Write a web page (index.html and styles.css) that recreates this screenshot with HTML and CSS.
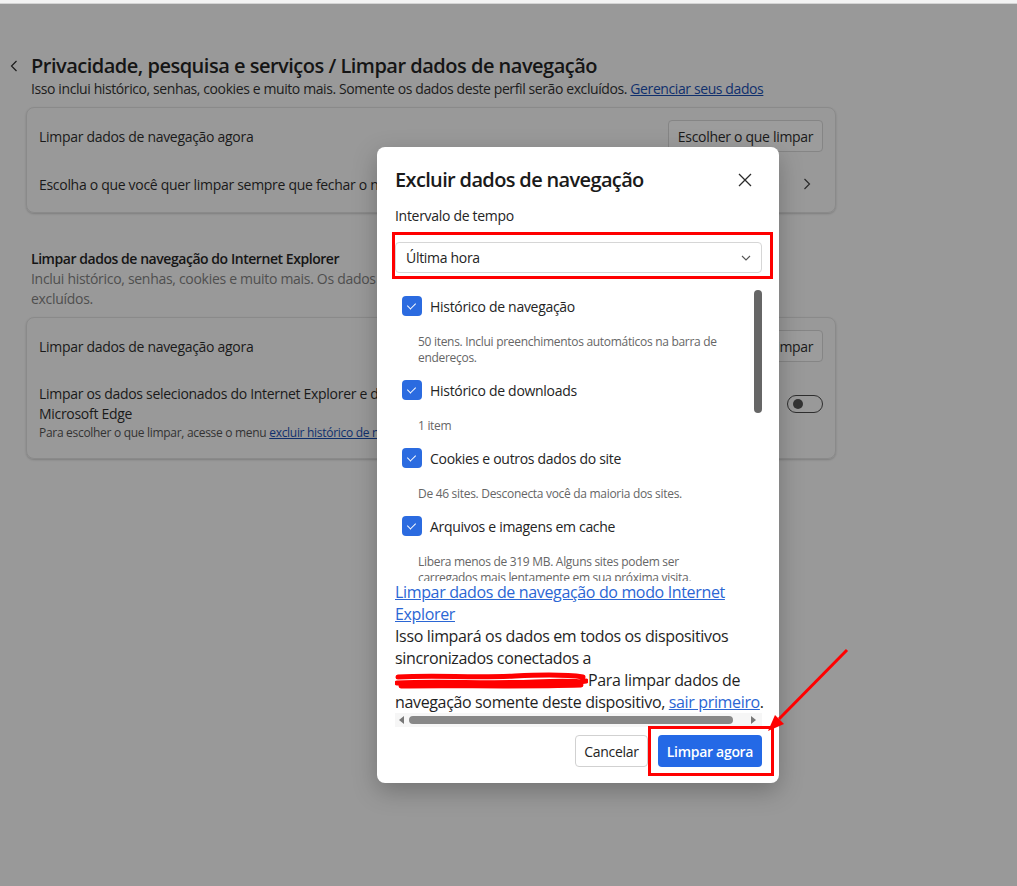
FILE: index.html
```html
<!DOCTYPE html>
<html lang="pt-BR">
<head>
    <meta charset="UTF-8">
    <title>Limpar dados de navegação</title>
    <link rel="stylesheet" href="styles.css">
</head>
<body>
    <div class="topbar"></div>

    <!-- Settings page (dimmed behind the dialog) -->
    <main class="settings">
        <div class="head">
            <svg class="back" width="8" height="12" viewBox="0 0 8 12"><path d="M6.5 1 L1.5 6 L6.5 11" fill="none" stroke="#1c1c1c" stroke-width="1.2"/></svg>
            <h1>Privacidade, pesquisa e serviços / Limpar dados de navegação</h1>
        </div>
        <p class="sub">Isso inclui histórico, senhas, cookies e muito mais. Somente os dados deste perfil serão excluídos. <a href="#">Gerenciar seus dados</a></p>

        <section class="card">
            <div class="row row-top">
                <span>Limpar dados de navegação agora</span>
                <button class="btn-ghost">Escolher o que limpar</button>
            </div>
            <div class="row row-link">
                <span>Escolha o que você quer limpar sempre que fechar o navegador</span>
                <svg width="8" height="12" viewBox="0 0 8 12"><path d="M1.5 1 L6.5 6 L1.5 11" fill="none" stroke="#2a2a2a" stroke-width="1.2"/></svg>
            </div>
        </section>

        <h2>Limpar dados de navegação do Internet Explorer</h2>
        <p class="muted">Inclui histórico, senhas, cookies e muito mais. Os dados do Internet Explorer e do modo IE serão<br>excluídos.</p>

        <section class="card">
            <div class="row row-top">
                <span>Limpar dados de navegação agora</span>
                <button class="btn-ghost">Escolher o que limpar</button>
            </div>
            <div class="row row-ie">
                <div>
                    <p class="ie-title">Limpar os dados selecionados do Internet Explorer e do<br>Microsoft Edge</p>
                    <p class="small">Para escolher o que limpar, acesse o menu <a href="#">excluir histórico de navegação</a></p>
                </div>
                <span class="toggle"><span class="knob"></span></span>
            </div>
        </section>
    </main>

    <!-- Clear browsing data dialog -->
    <div class="dialog">
        <div class="dlg-head">
            <h3>Excluir dados de navegação</h3>
            <svg width="14" height="14" viewBox="0 0 14 14"><path d="M1 1 L13 13 M13 1 L1 13" stroke="#2b2b2b" stroke-width="1.3"/></svg>
        </div>
        <div class="field-label">Intervalo de tempo</div>
        <div class="select">
            <span>Última hora</span>
            <svg width="10" height="6" viewBox="0 0 10 6"><path d="M1 1 L5 5 L9 1" fill="none" stroke="#555" stroke-width="1.1"/></svg>
        </div>

        <div class="list-wrap">
            <div class="list">
                <div class="item">
                    <div class="check-row"><span class="check"></span>Histórico de navegação</div>
                    <p class="desc">50 itens. Inclui preenchimentos automáticos na barra de<br>endereços.</p>
                </div>
                <div class="item">
                    <div class="check-row"><span class="check"></span>Histórico de downloads</div>
                    <p class="desc">1 item</p>
                </div>
                <div class="item">
                    <div class="check-row"><span class="check"></span>Cookies e outros dados do site</div>
                    <p class="desc">De 46 sites. Desconecta você da maioria dos sites.</p>
                </div>
                <div class="item">
                    <div class="check-row"><span class="check"></span>Arquivos e imagens em cache</div>
                    <p class="desc">Libera menos de 319 MB. Alguns sites podem ser<br>carregados mais lentamente em sua próxima visita.</p>
                </div>
            </div>
            <div class="vthumb"></div>
        </div>

        <div class="ie-text">
            <a href="#">Limpar dados de navegação do modo Internet<br>Explorer</a><br>
            Isso limpará os dados em todos os dispositivos<br>
            sincronizados conectados a<br>
            <svg class="redact" width="193" height="17" viewBox="0 0 193 17"><path d="M3 5 C40 3 80 6 120 4 S175 3 188 5 M2 11 C45 9 95 12 140 10 S182 11 191 9 M6 14 C60 13 120 15 186 13" fill="none" stroke="#ff0000" stroke-width="5" stroke-linecap="round"/></svg>Para limpar dados de<br>
            navegação somente deste dispositivo, <a href="#">sair primeiro</a>.
        </div>

        <div class="hscroll">
            <span class="arr arr-left"></span>
            <span class="hthumb"></span>
            <span class="arr arr-right"></span>
        </div>

        <div class="actions">
            <button class="btn-cancel">Cancelar</button>
            <button class="btn-primary">Limpar agora</button>
        </div>
    </div>

    <!-- Red annotations -->
    <div class="mark mark-select"></div>
    <div class="mark mark-btn"></div>
    <svg class="arrow" width="1017" height="886" viewBox="0 0 1017 886">
        <line x1="847" y1="650" x2="779" y2="719" stroke="#ff0000" stroke-width="3"/>
        <polygon points="768,731 784,724 775,715" fill="#ff0000"/>
    </svg>
</body>
</html>
```

FILE: styles.css
```css
* {
    margin: 0;
    padding: 0;
    box-sizing: border-box;
}
body {
    font-family: 'Open Sans', 'Noto Sans', sans-serif;
    background-color: #999;
    color: #1a1a1a;
    width: 1017px;
    height: 886px;
    overflow: hidden;
    position: relative;
    letter-spacing: -0.3px;
}
a {
    color: #10306d;
}
button {
    font-family: inherit;
    letter-spacing: inherit;
}
.topbar {
    height: 4px;
    background-color: #f3f3f3;
    border-bottom: 1px solid #d4d4d4;
}

/* settings page */
.settings {
    width: 836px;
    padding-left: 31px;
}
.head {
    display: flex;
    align-items: center;
    margin-top: 49px;
    margin-left: -21px;
    gap: 13px;
}
.head h1 {
    font-size: 20px;
    font-weight: 600;
    line-height: 26px;
    color: #151515;
    letter-spacing: -0.5px;
}
.sub {
    font-size: 14px;
    line-height: 20px;
    color: #1c1c1c;
    letter-spacing: -0.4px;
}
.card {
    margin-left: -5px;
    margin-top: 8px;
    border: 1px solid #8a8a8a;
    border-radius: 8px;
    box-shadow: 0 1px 2px rgba(0, 0, 0, 0.18);
    padding: 8px 12px 0 12px;
    font-size: 14px;
}
.row {
    display: flex;
    justify-content: space-between;
    align-items: center;
}
.row-top {
    height: 40px;
}
.row-link {
    height: 56px;
    padding-right: 12px;
}
.btn-ghost {
    height: 32px;
    width: 155px;
    font-size: 14px;
    color: #1a1a1a;
    background-color: #9c9c9c;
    border: 1px solid #858585;
    border-radius: 4px;
}
h2 {
    margin-top: 36px;
    font-size: 14px;
    font-weight: 600;
    line-height: 20px;
    color: #151515;
    letter-spacing: -0.45px;
}
.muted {
    font-size: 14px;
    line-height: 20px;
    color: #4f4f4f;
}
.row-ie {
    align-items: flex-start;
    padding: 18px 0 16px;
}
.ie-title {
    line-height: 20px;
}
.small {
    font-size: 12px;
    line-height: 18px;
    color: #333;
}
.toggle {
    margin-top: 11px;
    width: 36px;
    height: 18px;
    border: 1px solid #2e2e2e;
    border-radius: 9px;
    display: flex;
    align-items: center;
    padding-left: 5px;
}
.knob {
    width: 10px;
    height: 10px;
    border-radius: 50%;
    background-color: #333;
}

/* dialog */
.dialog {
    position: absolute;
    left: 377px;
    top: 147px;
    width: 402px;
    height: 636px;
    background-color: #fff;
    border-radius: 8px;
    box-shadow: 0 8px 24px rgba(0, 0, 0, 0.25);
    padding: 19px 17px 16px 18px;
    color: #242424;
}
.dlg-head {
    display: flex;
    justify-content: space-between;
    align-items: center;
    padding-right: 10px;
}
.dlg-head h3 {
    font-size: 20px;
    font-weight: 600;
    line-height: 28px;
    color: #1a1a1a;
    letter-spacing: -0.65px;
}
.field-label {
    margin-top: 12px;
    font-size: 14px;
    line-height: 20px;
}
.select {
    margin-top: 16px;
    height: 31px;
    border: 1px solid #d6d6d6;
    border-radius: 4px;
    display: flex;
    justify-content: space-between;
    align-items: center;
    padding: 0 10px;
    font-size: 14px;
}
.list-wrap {
    position: relative;
    margin-top: 14px;
    height: 294px;
    overflow: hidden;
}
.list {
    padding-top: 9px;
    padding-right: 20px;
}
.item + .item {
    margin-top: 14px;
}
.check-row {
    display: flex;
    align-items: center;
    gap: 8px;
    height: 20px;
    padding-left: 7px;
    font-size: 14px;
}
.check {
    width: 20px;
    height: 20px;
    border-radius: 4px;
    background-color: #2b6be0;
    position: relative;
}
.check::after {
    content: '';
    position: absolute;
    left: 7px;
    top: 5px;
    width: 4px;
    height: 7px;
    border: solid #fff;
    border-width: 0 1.5px 1.5px 0;
    transform: rotate(45deg);
}
.desc {
    margin-top: 18px;
    margin-left: 23px;
    font-size: 12px;
    line-height: 16px;
    color: #666;
}
.vthumb {
    position: absolute;
    right: 0;
    top: 3px;
    width: 8px;
    height: 123px;
    border-radius: 4px;
    background-color: #666;
}
.ie-text {
    font-size: 16px;
    line-height: 22px;
    color: #1f1f1f;
    white-space: nowrap;
    letter-spacing: -0.35px;
}
.ie-text a {
    color: #2b66d4;
}
.redact {
    vertical-align: -3px;
}
.hscroll {
    height: 14px;
    display: flex;
    align-items: center;
    background-color: #f6f6f6;
    padding: 0 6px 0 4px;
    gap: 5px;
}
.arr {
    width: 0;
    height: 0;
    border-top: 4px solid transparent;
    border-bottom: 4px solid transparent;
}
.arr-left {
    border-right: 5px solid #777;
}
.arr-right {
    border-left: 5px solid #777;
    margin-left: auto;
}
.hthumb {
    width: 324px;
    height: 8px;
    border-radius: 4px;
    background-color: #888;
}
.actions {
    margin-top: 8px;
    display: flex;
    justify-content: flex-end;
    gap: 10px;
}
.btn-cancel {
    width: 73px;
    height: 32px;
    font-size: 14px;
    color: #242424;
    background-color: #fff;
    border: 1px solid #d1d1d1;
    border-radius: 4px;
}
.btn-primary {
    width: 104px;
    height: 32px;
    font-size: 14px;
    font-weight: 600;
    color: #fff;
    background-color: #2469e6;
    border: none;
    border-radius: 4px;
}

/* annotations */
.mark {
    position: absolute;
    border: 3px solid #ff0000;
}
.mark-select {
    left: 392px;
    top: 232px;
    width: 381px;
    height: 47px;
}
.mark-btn {
    left: 648px;
    top: 726px;
    width: 126px;
    height: 50px;
}
.arrow {
    position: absolute;
    left: 0;
    top: 0;
}
```
